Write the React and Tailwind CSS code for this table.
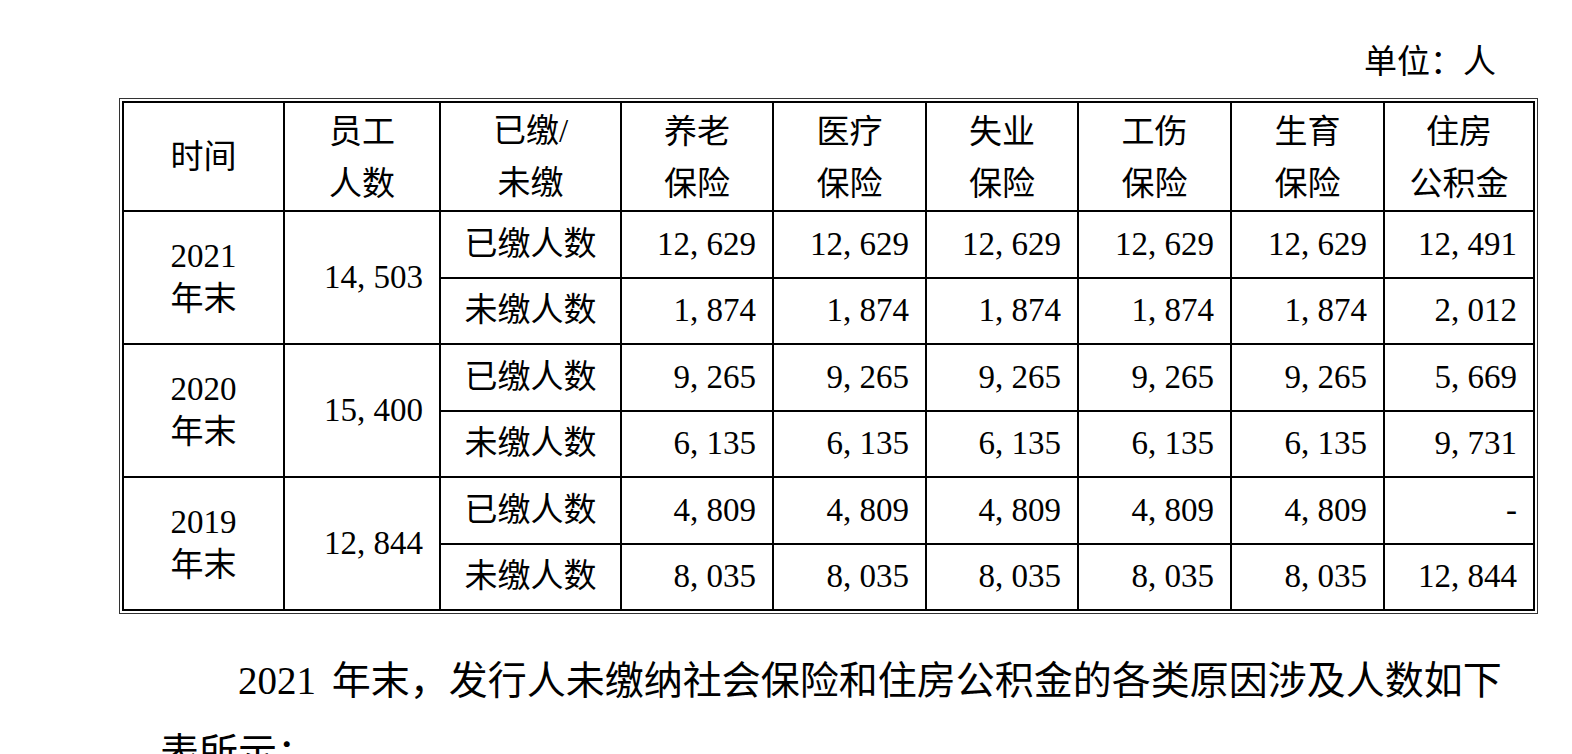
import React from 'react';

const colWidths = [161, 156, 181, 152, 153, 152, 153, 153, 150];

const headers = [
  ['时间'],
  ['员工', '人数'],
  ['已缴/', '未缴'],
  ['养老', '保险'],
  ['医疗', '保险'],
  ['失业', '保险'],
  ['工伤', '保险'],
  ['生育', '保险'],
  ['住房', '公积金'],
];

const groups = [
  {
    year: '2021',
    total: '14,503',
    paid: ['12,629', '12,629', '12,629', '12,629', '12,629', '12,491'],
    unpaid: ['1,874', '1,874', '1,874', '1,874', '1,874', '2,012'],
  },
  {
    year: '2020',
    total: '15,400',
    paid: ['9,265', '9,265', '9,265', '9,265', '9,265', '5,669'],
    unpaid: ['6,135', '6,135', '6,135', '6,135', '6,135', '9,731'],
  },
  {
    year: '2019',
    total: '12,844',
    paid: ['4,809', '4,809', '4,809', '4,809', '4,809', '-'],
    unpaid: ['8,035', '8,035', '8,035', '8,035', '8,035', '12,844'],
  },
];

function Num({ value }) {
  const parts = value.split(',');
  return (
    <>
      {parts.map((p, i) => (
        <React.Fragment key={i}>
          {i > 0 && <span className="inline-block w-[0.5em] text-left">,</span>}
          {p}
        </React.Fragment>
      ))}
    </>
  );
}

const cell = 'border-2 border-black p-0 align-middle';

function headPad(i, lines) {
  if (lines.length === 1 || i === 2) return '';
  return 'pt-[3px]';
}

export default function App() {
  return (
    <div className="h-[754px] w-[1572px] overflow-hidden bg-white text-black [font-family:'Liberation_Serif','Noto_Sans_CJK_SC',serif]">
      <div className="pt-[42px] pr-[76px] text-right text-[33px] leading-[40px]">单位：人</div>

      <div className="mt-[16px] ml-[119px] w-fit border border-[#333] p-[2px]">
        <table className="table-fixed border-collapse w-[1411px] text-[33px]">
          <colgroup>
            {colWidths.map((w, i) => (
              <col key={i} style={{ width: w }} />
            ))}
          </colgroup>
          <thead>
            <tr>
              {headers.map((lines, i) => (
                <th
                  key={i}
                  className={`${cell} h-[107px] font-normal text-center leading-[52px] ${headPad(i, lines)}`}
                >
                  {lines.map((l) => (
                    <div key={l}>{l}</div>
                  ))}
                </th>
              ))}
            </tr>
          </thead>
          <tbody>
            {groups.map((g) => (
              <React.Fragment key={g.year}>
                <tr>
                  <td rowSpan={2} className={`${cell} text-center leading-[43px]`}>
                    <div>{g.year}</div>
                    <div>年末</div>
                  </td>
                  <td rowSpan={2} className={`${cell} text-right pr-[16px]`}>
                    <Num value={g.total} />
                  </td>
                  <td className={`${cell} h-[66.5px] text-center`}>已缴人数</td>
                  {g.paid.map((v, i) => (
                    <td key={i} className={`${cell} text-right pr-[16px]`}>
                      <Num value={v} />
                    </td>
                  ))}
                </tr>
                <tr>
                  <td className={`${cell} h-[66.5px] text-center`}>未缴人数</td>
                  {g.unpaid.map((v, i) => (
                    <td key={i} className={`${cell} text-right pr-[16px]`}>
                      <Num value={v} />
                    </td>
                  ))}
                </tr>
              </React.Fragment>
            ))}
          </tbody>
        </table>
      </div>

      <p className="mt-[31px] ml-[160px] w-[1350px] text-[39px] leading-[72px] indent-[2em] [word-spacing:6px]">
        2021 年末，发行人未缴纳社会保险和住房公积金的各类原因涉及人数如下表所示：
      </p>
    </div>
  );
}
